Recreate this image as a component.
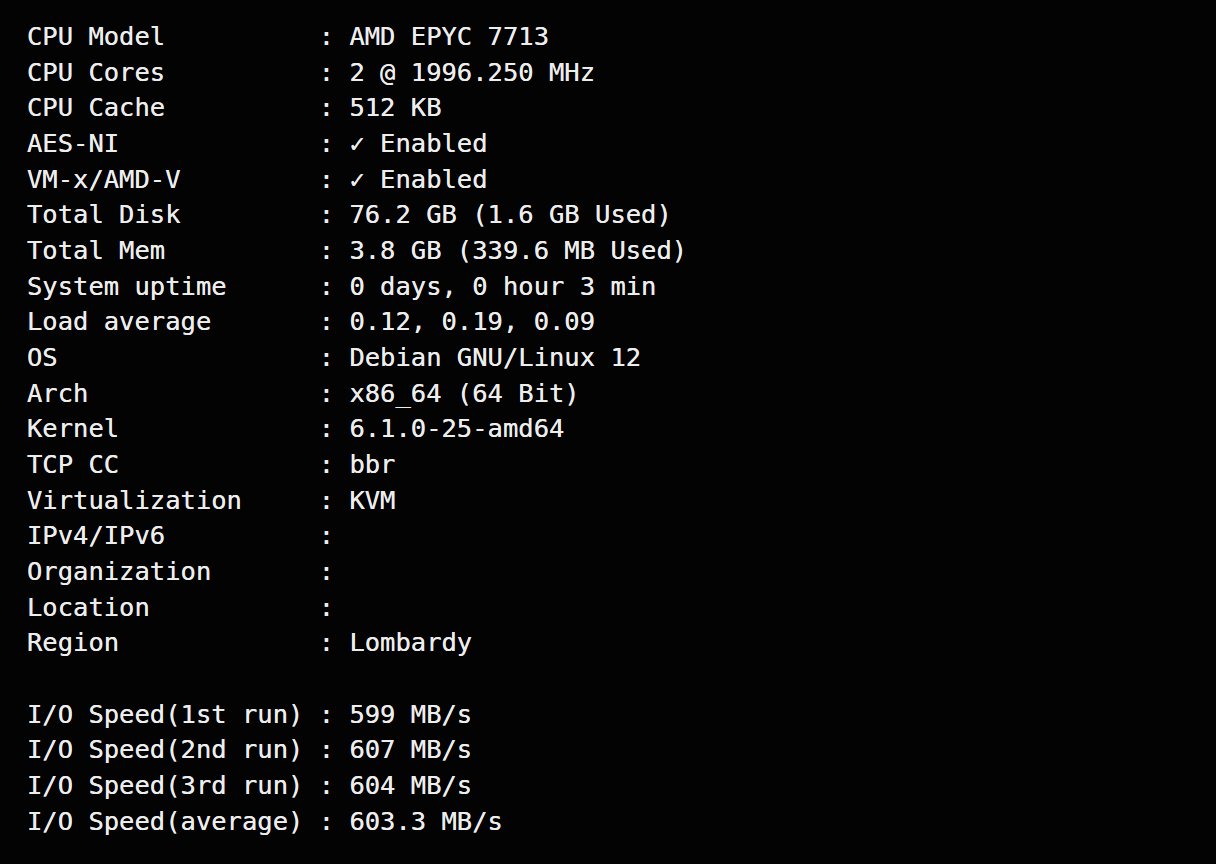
const lines = [
  'CPU Model          : AMD EPYC 7713',
  'CPU Cores          : 2 @ 1996.250 MHz',
  'CPU Cache          : 512 KB',
  'AES-NI             : ✓ Enabled',
  'VM-x/AMD-V         : ✓ Enabled',
  'Total Disk         : 76.2 GB (1.6 GB Used)',
  'Total Mem          : 3.8 GB (339.6 MB Used)',
  'System uptime      : 0 days, 0 hour 3 min',
  'Load average       : 0.12, 0.19, 0.09',
  'OS                 : Debian GNU/Linux 12',
  'Arch               : x86_64 (64 Bit)',
  'Kernel             : 6.1.0-25-amd64',
  'TCP CC             : bbr',
  'Virtualization     : KVM',
  'IPv4/IPv6          :',
  'Organization       :',
  'Location           :',
  'Region             : Lombardy',
  '',
  'I/O Speed(1st run) : 599 MB/s',
  'I/O Speed(2nd run) : 607 MB/s',
  'I/O Speed(3rd run) : 604 MB/s',
  'I/O Speed(average) : 603.3 MB/s',
]

export default function App() {
  return (
    <div className="w-[1216px] h-[864px] bg-[#030303] overflow-hidden pl-[27px] pt-[19px]">
      <pre className="font-['DejaVu_Sans_Mono',monospace] text-[25.5px] leading-[35.68px] text-[#ededed] [text-shadow:0_0_0.6px_#ededed]">
        {lines.map((l, i) => (
          <div key={i} className="h-[35.68px]">{l}</div>
        ))}
      </pre>
    </div>
  )
}
